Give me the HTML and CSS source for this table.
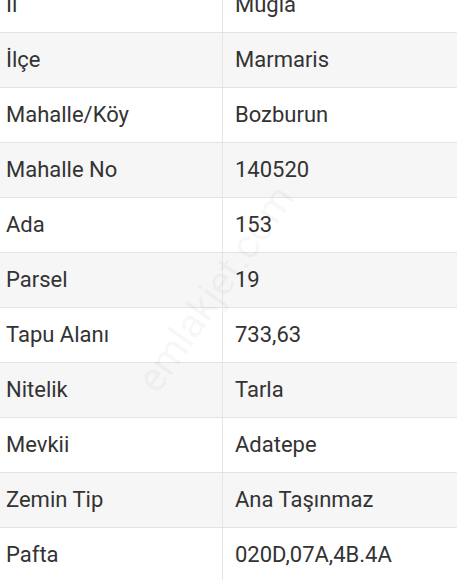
FILE: index.html
```html
<!DOCTYPE html>
<html lang="tr">
<head>
<meta charset="utf-8">
<link rel="stylesheet" href="styles.css">
</head>
<body>
<div class="page">
  <div class="table">
    <div class="row"><div class="key">İl</div><div class="val">Muğla</div></div>
    <div class="row alt"><div class="key">İlçe</div><div class="val">Marmaris</div></div>
    <div class="row"><div class="key">Mahalle/Köy</div><div class="val">Bozburun</div></div>
    <div class="row alt"><div class="key">Mahalle No</div><div class="val">140520</div></div>
    <div class="row"><div class="key">Ada</div><div class="val">153</div></div>
    <div class="row alt"><div class="key">Parsel</div><div class="val">19</div></div>
    <div class="row"><div class="key">Tapu Alanı</div><div class="val">733,63</div></div>
    <div class="row alt"><div class="key">Nitelik</div><div class="val">Tarla</div></div>
    <div class="row"><div class="key">Mevkii</div><div class="val">Adatepe</div></div>
    <div class="row alt"><div class="key">Zemin Tip</div><div class="val">Ana Taşınmaz</div></div>
    <div class="row"><div class="key">Pafta</div><div class="val">020D,07A,4B.4A</div></div>
  </div>
  <div class="watermark">emlakjet.com</div>
</div>
</body>
</html>
```
FILE: styles.css
```css
html, body {
  margin: 0;
  padding: 0;
  background: #ffffff;
}
.page {
  position: relative;
  width: 457px;
  height: 580px;
  overflow: hidden;
  font-family: Roboto, "Liberation Sans", sans-serif;
  color: #333333;
}
.table {
  margin-top: -22px;
}
.row {
  display: grid;
  grid-template-columns: 223px 1fr;
  height: 55px;
  box-sizing: border-box;
  border-bottom: 1px solid #e3e3e3;
  background: #ffffff;
}
.row.alt {
  background: #f6f6f6;
}
.key, .val {
  display: flex;
  align-items: center;
  font-size: 22px;
  line-height: 1;
}
.key {
  padding-left: 6px;
  border-right: 1px solid #e6e6e6;
}
.val {
  padding-left: 12px;
}
.watermark {
  position: absolute;
  left: 95px;
  top: 265px;
  font-size: 40px;
  color: rgba(0, 0, 0, 0.05);
  transform: rotate(-55deg);
  transform-origin: center;
  white-space: nowrap;
}
```
